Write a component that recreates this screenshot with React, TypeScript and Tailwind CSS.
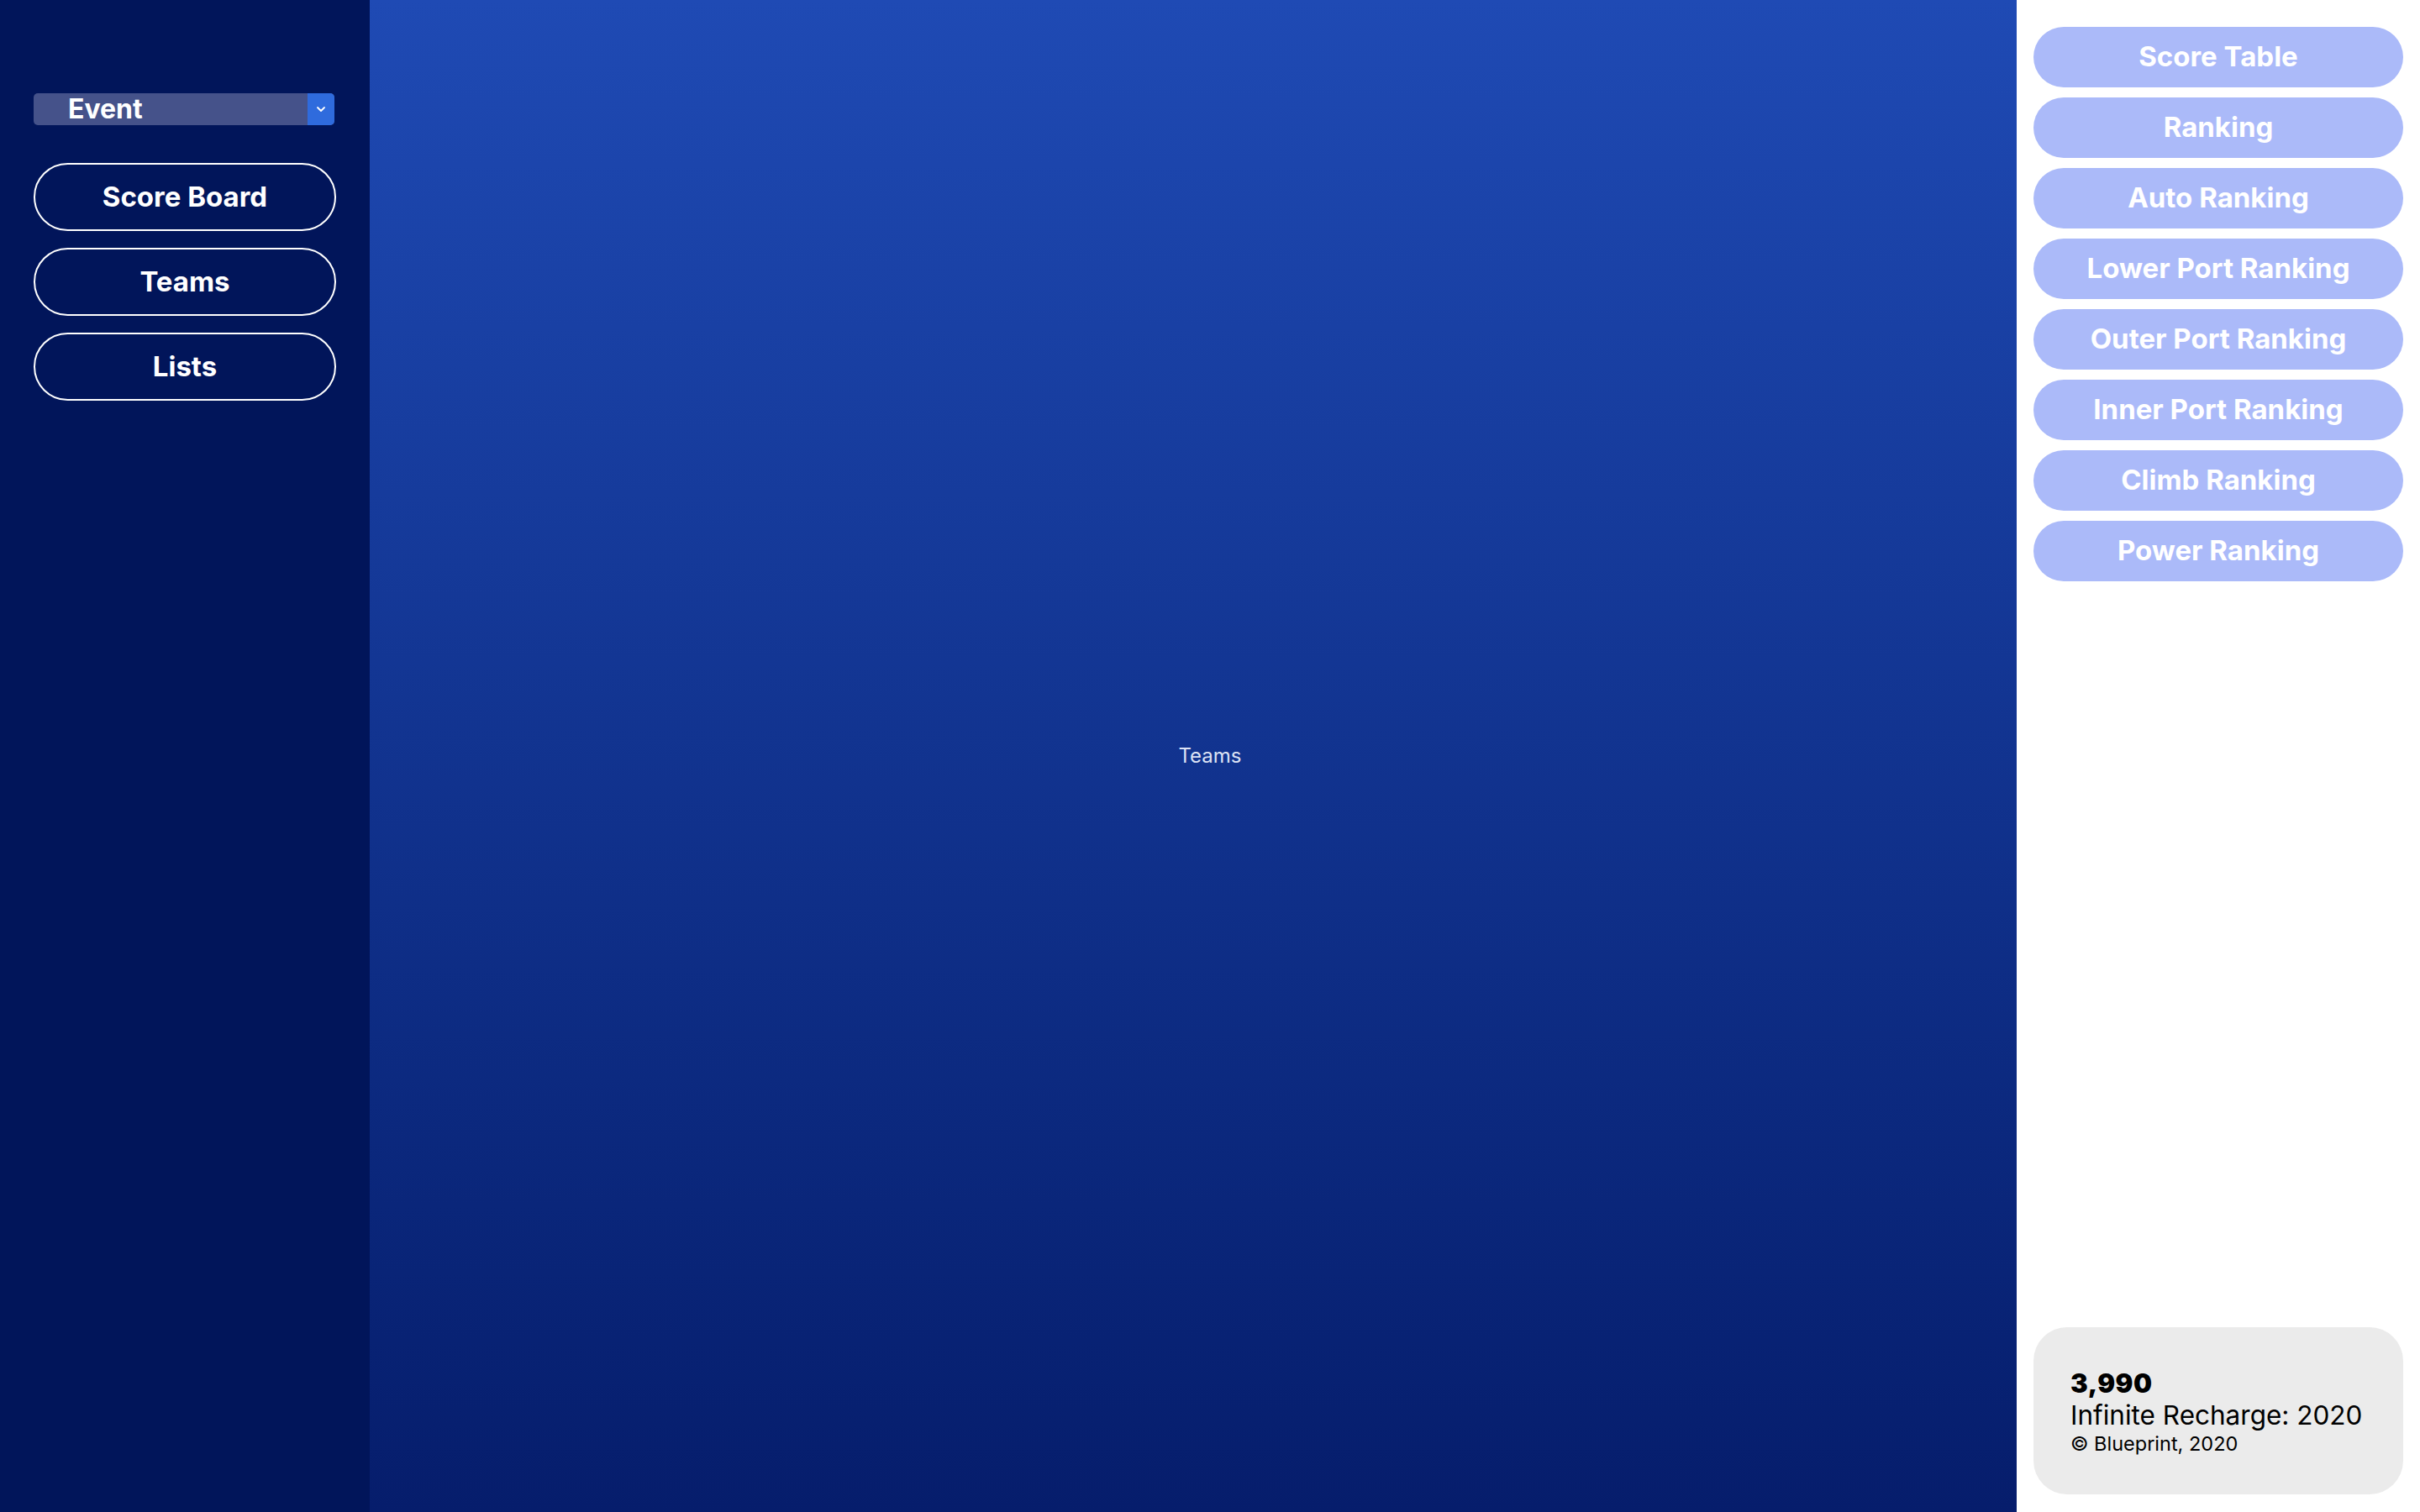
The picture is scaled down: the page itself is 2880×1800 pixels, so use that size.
import React, { useState } from 'react';

const rankings = [
  'Score Table',
  'Ranking',
  'Auto Ranking',
  'Lower Port Ranking',
  'Outer Port Ranking',
  'Inner Port Ranking',
  'Climb Ranking',
  'Power Ranking',
];

const navItems = ['Score Board', 'Teams', 'Lists'];

export default function App() {
  const [page, setPage] = useState('Teams');

  return (
    <div className="flex h-screen w-full font-['Inter',sans-serif]">
      {/* Sidebar */}
      <aside className="w-[440px] shrink-0 bg-[#01155a] px-[40px] pt-[111px]">
        <div className="flex h-[38px] w-[358px] items-stretch overflow-hidden rounded-[5px] bg-[#45528a]">
          <div className="flex flex-1 items-center pl-[41px] text-[32px] font-bold leading-none text-white">Event</div>
          <div className="flex w-[32px] items-center justify-center bg-[#2f6bdd]">
            <svg width="14" height="14" viewBox="0 0 14 14" fill="none">
              <path d="M3 5l4 4 4-4" stroke="white" strokeWidth="1.8" strokeLinecap="round" strokeLinejoin="round" />
            </svg>
          </div>
        </div>

        <nav className="mt-[45px] flex flex-col gap-[20px]">
          {navItems.map(item => (
            <button
              key={item}
              onClick={() => setPage(item)}
              className="h-[81px] w-[360px] rounded-full border-2 border-white text-[33px] font-bold text-white"
            >
              {item}
            </button>
          ))}
        </nav>
      </aside>

      {/* Main */}
      <main className="flex flex-1 items-center justify-center bg-gradient-to-b from-[#1f4ab4] to-[#061d6c] pl-[40px]">
        <span className="text-[24px] text-[#dde3f5]">{page}</span>
      </main>

      {/* Right panel */}
      <aside className="flex w-[480px] shrink-0 flex-col justify-between bg-white px-[20px] pb-[21px] pt-[32px]">
        <div className="flex flex-col gap-[12px]">
          {rankings.map(r => (
            <button key={r} className="h-[72px] w-full rounded-full bg-[#abbaf9] text-[33px] font-bold text-white">
              {r}
            </button>
          ))}
        </div>

        <div className="flex h-[199px] flex-col justify-center whitespace-nowrap rounded-[40px] bg-[#ebebeb] pl-[44px] pr-[16px] pt-[2px] text-black">
          <p className="text-[31px] font-black leading-[38px] tracking-[0.5px]">3,990</p>
          <p className="text-[31.5px] leading-[38px]">Infinite Recharge: 2020</p>
          <p className="text-[23.5px] leading-[30px]">© Blueprint, 2020</p>
        </div>
      </aside>
    </div>
  );
}
